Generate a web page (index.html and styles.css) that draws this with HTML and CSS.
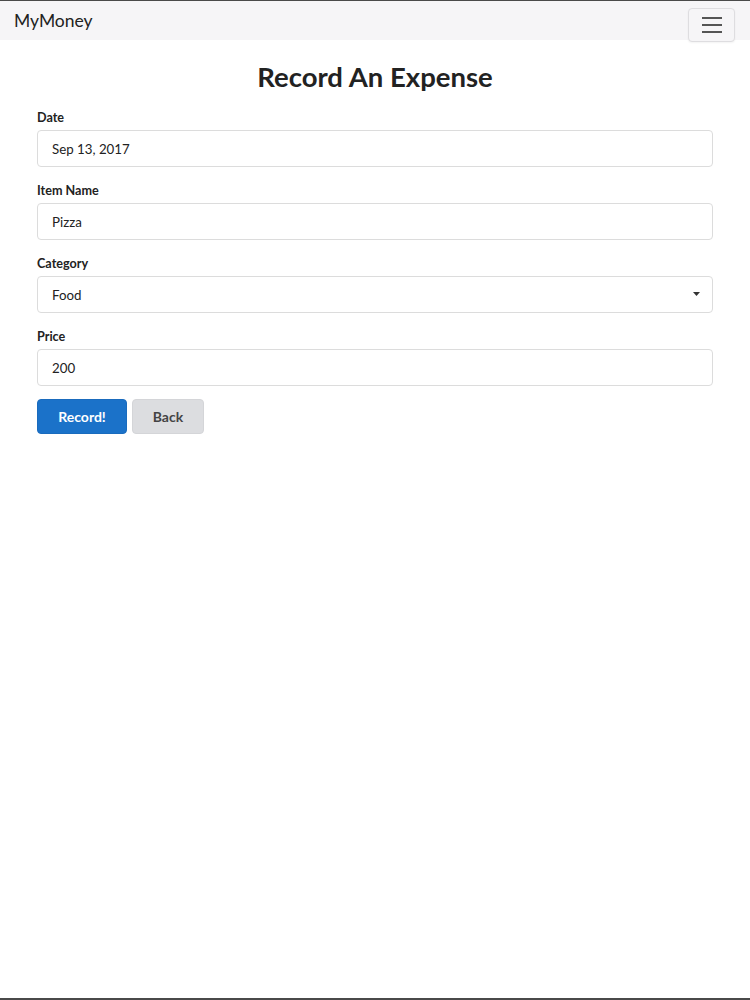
FILE: index.html
```html
<!DOCTYPE html>
<html lang="en">
<head>
    <meta charset="UTF-8">
    <meta name="viewport" content="width=device-width, initial-scale=1.0">
    <title>Record An Expense - MyMoney</title>
    <link rel="stylesheet" href="styles.css">
</head>
<body>
    <nav class="navbar">
        <a href="#" class="brand">MyMoney</a>
        <button class="toggler" type="button" aria-label="Toggle navigation">
            <span class="bar"></span>
            <span class="bar"></span>
            <span class="bar"></span>
        </button>
    </nav>

    <main class="container">
        <h1>Record An Expense</h1>

        <form class="expense-form">
            <div class="form-group">
                <label for="date">Date</label>
                <input type="text" id="date" class="form-control" value="Sep 13, 2017">
            </div>

            <div class="form-group">
                <label for="item">Item Name</label>
                <input type="text" id="item" class="form-control" value="Pizza">
            </div>

            <div class="form-group">
                <label for="category">Category</label>
                <div class="select-wrap">
                    <select id="category" class="form-control">
                        <option>Food</option>
                        <option>Transport</option>
                        <option>Bills</option>
                        <option>Other</option>
                    </select>
                    <svg class="caret" width="7" height="4" viewBox="0 0 7 4">
                        <path d="M0 0 L7 0 L3.5 4 Z" fill="#333"/>
                    </svg>
                </div>
            </div>

            <div class="form-group">
                <label for="price">Price</label>
                <input type="text" id="price" class="form-control" value="200">
            </div>

            <div class="actions">
                <button type="submit" class="btn btn-primary">Record!</button>
                <button type="button" class="btn btn-secondary">Back</button>
            </div>
        </form>
    </main>
</body>
</html>
```

FILE: styles.css
```css
* {
    margin: 0;
    padding: 0;
    box-sizing: border-box;
}

html {
    height: 100%;
}

body {
    font-family: Lato, "Open Sans", sans-serif;
    color: #222;
    background: #fff;
    min-height: 100%;
    border-top: 1px solid #4a4a4a;
    border-bottom: 2px solid #4a4a4a;
}

.navbar {
    height: 39px;
    background: #f6f5f7;
    display: flex;
    align-items: flex-start;
    justify-content: space-between;
    padding: 0 14px;
}

.brand {
    font-size: 17.5px;
    line-height: 39px;
    color: #222;
    text-decoration: none;
}

.toggler {
    width: 47px;
    height: 34px;
    margin-top: 7px;
    margin-right: 1px;
    background: #f6f5f7;
    border: 1px solid #dedde0;
    border-radius: 4px;
    display: flex;
    flex-direction: column;
    align-items: center;
    justify-content: center;
    gap: 5px;
    box-shadow: 0 1px 2px rgba(0, 0, 0, 0.05);
}

.toggler .bar {
    display: block;
    width: 20px;
    height: 2px;
    background: #555;
}

.container {
    padding: 20px 37px 0;
}

h1 {
    font-size: 27.5px;
    font-weight: 700;
    line-height: 34px;
    text-align: center;
    color: #222;
    margin-bottom: 13px;
}

.form-group {
    margin-bottom: 13px;
}

label {
    display: block;
    font-size: 12.6px;
    font-weight: 700;
    line-height: 18px;
    padding-top: 2px;
    margin-bottom: 3px;
    color: #222;
}

.form-control {
    display: block;
    width: 100%;
    height: 37px;
    padding: 0 14px;
    font-family: inherit;
    font-size: 13.3px;
    color: #222;
    background: #fff;
    border: 1px solid #dcdcdc;
    border-radius: 4px;
    outline: none;
}

.select-wrap {
    position: relative;
}

select.form-control {
    appearance: none;
    -webkit-appearance: none;
}

.caret {
    position: absolute;
    right: 13px;
    top: 16px;
    pointer-events: none;
}

.actions {
    display: flex;
    gap: 5px;
    margin-top: 2px;
}

.btn {
    height: 35px;
    font-family: inherit;
    font-size: 14px;
    font-weight: 700;
    border-radius: 4px;
    border: 1px solid transparent;
    cursor: pointer;
}

.btn-primary {
    width: 90px;
    background: #1b72c9;
    border-color: #1a6bbd;
    color: #fff;
}

.btn-secondary {
    width: 72px;
    background: #dcdde0;
    border-color: #d4d5d8;
    color: #444;
}
```
